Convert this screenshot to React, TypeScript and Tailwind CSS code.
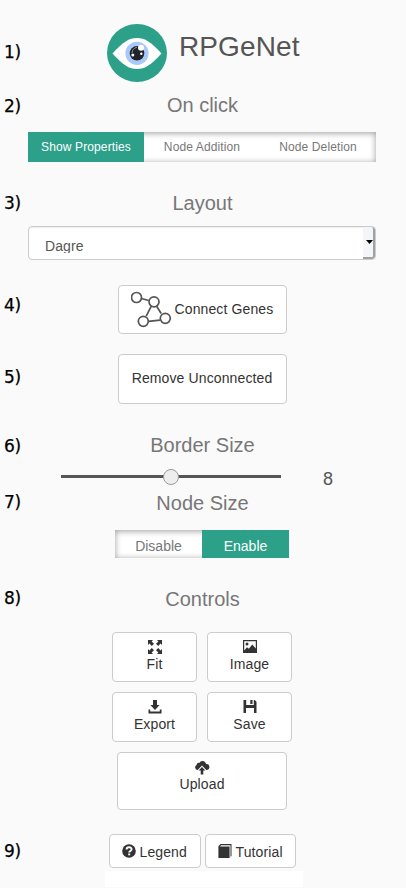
import React from "react";

type IconProps = { className?: string };

function EyeLogo() {
  return (
    <svg width="60" height="58" viewBox="0 0 60 58" className="block">
      <ellipse cx="30" cy="29" rx="30" ry="29" fill="#2ca089" />
      <path d="M5.500 29.500C16 18 22 14 30 14S44 18 54.500 29.500C44 41 38 45 30 45S16 41 5.500 29.500Z" fill="#fff" />
      <circle cx="30" cy="29.300" r="11.600" fill="#a9c8fb" />
      <circle cx="30" cy="29.300" r="7.300" fill="#202428" />
      <path d="M25 29c.2-3 2-5 5-5.800" stroke="#8a8f94" strokeWidth="1" fill="none" />
      <circle cx="34" cy="23.800" r="3" fill="#fff" />
      <circle cx="25.800" cy="31" r="1.500" fill="#fff" />
      <circle cx="34.300" cy="29.800" r="1.200" fill="#fff" />
    </svg>
  );
}

function GraphIcon() {
  return (
    <svg width="42" height="37" viewBox="0 0 42 37" fill="none" stroke="#555" strokeWidth="1.700" className="block">
      <path d="M10.500 7.500l7.200 2M20.300 15.200l-5.100 10M25.500 15l4.700 7.500M17.500 30.400l11.500-1.300" />
      <circle cx="5.500" cy="6.500" r="5" />
      <circle cx="23" cy="10.800" r="5" />
      <circle cx="12.300" cy="30.300" r="5" />
      <circle cx="34.300" cy="27.300" r="5" />
    </svg>
  );
}

function FitIcon() {
  return (
    <svg width="14" height="14" viewBox="0 0 14 14" fill="#333" className="block">
      <path d="M0 0h5L3.600 1.400 6 3.800 3.800 6 1.400 3.600 0 5zM14 0v5l-1.400-1.400L10.200 6 8 3.800l2.400-2.400L9 0zM0 14V9l1.400 1.400L3.800 8 6 10.200l-2.400 2.400L5 14zM14 14H9l1.400-1.400L8 10.200 10.200 8l2.400 2.400L14 9z" />
    </svg>
  );
}

function ImageIcon() {
  return (
    <svg width="14" height="13" viewBox="0 0 14 13" fill="#333" className="block">
      <path fillRule="evenodd" d="M0 0h14v13H0zM1.200 1.200v9.200L4 7.300l1.800 1.500L9.300 4.600l3.500 4V1.200z" />
      <circle cx="4" cy="4" r="1.500" />
    </svg>
  );
}

function ExportIcon() {
  return (
    <svg width="14" height="14" viewBox="0 0 14 14" fill="#333" className="block">
      <path d="M5 0h4v5h2.600L7 10 2.400 5H5zM.5 9.500h1.700v2h9.600v-2h1.700V13.500H.5z" />
    </svg>
  );
}

function SaveIcon() {
  return (
    <svg width="14" height="14" viewBox="0 0 14 14" fill="#333" className="block">
      <path fillRule="evenodd" d="M.5 0h2.700v5h7.600V0h.9l1.800 1.800V13H11V8H3v5H.5z" />
      <path d="M7.300 0h2.200v4H7.300z" />
    </svg>
  );
}

function UploadIcon() {
  return (
    <svg width="16" height="14" viewBox="0 0 16 14" fill="#333" className="block">
      <path d="M3.300 9A2.700 2.700 0 0 1 2.500 4 2.500 2.500 0 0 1 5.300 1.900 3.600 3.600 0 0 1 12 3.100 2.900 2.900 0 0 1 13 8.900H12.300L8 4.600 3.700 9z" />
      <path d="M8 6.100l3.400 3.500H9.300V13.500H6.700V9.600H4.600z" />
    </svg>
  );
}

function QuestionIcon({ className }: IconProps) {
  return (
    <svg width="14" height="14" viewBox="0 0 14 14" className={className}>
      <circle cx="7" cy="7" r="6.800" fill="#333" />
      <path d="M4.600 5.500C4.600 2.500 9.600 2.500 9.600 5.300 9.600 7 7.200 6.900 7.200 8.500" fill="none" stroke="#fff" strokeWidth="1.900" />
      <path d="M6.200 9.500h2v1.800h-2z" fill="#fff" />
    </svg>
  );
}

function BookIcon({ className }: IconProps) {
  return (
    <svg width="14" height="14" viewBox="0 0 14 14" className={className}>
      <path d="M.4 2.200L2.500 0h11v12l-1 .8V1.200H3L2 2.400h9.600V14H.4z" fill="#333" />
    </svg>
  );
}

function Section({ className, label, labelClass, children }: { className: string; label: string; labelClass: string; children: React.ReactNode }) {
  return (
    <section className={`flex shrink-0 ${className}`}>
      <div className="w-7 shrink-0 pl-1">
        <div className={`h-5 font-['DejaVu_Sans',sans-serif] text-[17px] leading-5 tracking-[-0.3px] text-black [-webkit-text-stroke:0.25px_black] ${labelClass}`}>{label}</div>
      </div>
      <div className="flex w-[348px] shrink-0 flex-col items-center">{children}</div>
    </section>
  );
}

function Heading({ children }: { children: React.ReactNode }) {
  return <h2 className="h-6 shrink-0 pl-px text-xl leading-6 whitespace-nowrap text-[#777]">{children}</h2>;
}

const button = "shrink-0 rounded border border-[#ccc] bg-white text-sm leading-5 tracking-[0.12px] whitespace-nowrap text-[#333]";

function Tile({ icon, text }: { icon: React.ReactNode; text: string }) {
  return (
    <button className={`${button} flex h-[50px] w-[85px] flex-col items-center pt-[7px]`}>
      <span className="flex h-[14px] items-start">{icon}</span>
      <span>{text}</span>
    </button>
  );
}

export default function App() {
  return (
    <main className="flex h-[888px] w-[406px] flex-col overflow-hidden bg-[#fafafa] font-['Liberation_Sans',Arial,sans-serif]">
      <Section className="h-[93px]" label="1)" labelClass="mt-[42px]">
        <div className="mt-6 flex w-full pl-[79px]">
          <EyeLogo />
          <h1 className="ml-3 h-10 pt-[7px] text-[28px] leading-8 tracking-[0.1px] text-[#555]">RPGeNet</h1>
        </div>
      </Section>

      <Section className="h-[98px]" label="2)" labelClass="mt-[3px]">
        <Heading>On click</Heading>
        <div className="mt-[15px] grid h-[30px] w-full grid-cols-3 bg-white text-center text-xs leading-[31px] tracking-[0.12px] text-[#777] shadow-[inset_0_1px_6px_rgba(0,0,0,0.4)]">
          <div className="h-[30px] bg-[#2ca089] text-white">Show Properties</div>
          <div className="h-[30px]">Node Addition</div>
          <div className="h-[30px]">Node Deletion</div>
        </div>
      </Section>

      <Section className="h-[94px]" label="3)" labelClass="mt-0.5">
        <Heading>Layout</Heading>
        <div className="mt-[11px] flex h-[34px] w-full justify-between overflow-hidden rounded border border-[#ccc] bg-white shadow-[inset_0_1px_1px_rgba(0,0,0,0.075)]">
          <div className="mt-[9px] h-[17px] overflow-hidden pl-4 text-sm leading-5 tracking-[0.1px] text-[#555]">Dagre</div>
          <div className="flex w-3 items-center justify-end rounded-r-[3px] border-r-2 border-b-2 border-[#9da3a4] bg-[#f3f5f7]">
            <svg width="7" height="4" viewBox="0 0 7 4" className="block">
              <path d="M0 0h7L3.500 4z" fill="#000" />
            </svg>
          </div>
        </div>
      </Section>

      <Section className="h-[69px]" label="4)" labelClass="mt-[10px]">
        <button className={`${button} flex h-[49px] w-[169px] pl-3`}>
          <span className="mt-[5px]"><GraphIcon /></span>
          <span className="mt-[13px] ml-0.5">Connect Genes</span>
        </button>
      </Section>

      <Section className="h-[79px]" label="5)" labelClass="mt-[13px]">
        <button className={`${button} h-[50px] w-[169px] pb-[2px]`}>Remove Unconnected</button>
      </Section>

      <Section className="h-[58px]" label="6)" labelClass="mt-[3px]">
        <Heading>Border Size</Heading>
        <div className="flex h-8 w-full pt-3 pl-[33px]">
          <div className="mt-[6px] flex h-[3px] w-[220px] items-center justify-center bg-[#555]">
            <div className="mt-px h-4 w-4 shrink-0 rounded-full border border-[#999] bg-[#eee]" />
          </div>
          <span className="ml-[42px] text-lg leading-5 text-[#555]">8</span>
        </div>
      </Section>

      <Section className="h-24" label="7)" labelClass="mt-px">
        <Heading>Node Size</Heading>
        <div className="mt-[15px] grid h-7 w-[174px] grid-cols-2 bg-white text-center text-sm leading-8 text-[#777] shadow-[inset_0_1px_6px_rgba(0,0,0,0.4)]">
          <div className="h-7">Disable</div>
          <div className="h-7 bg-[#2ca089] text-white">Enable</div>
        </div>
      </Section>

      <Section className="h-[247px]" label="8)" labelClass="mt-px">
        <Heading>Controls</Heading>
        <div className="mt-[21px] grid grid-cols-2 gap-[10px]">
          <Tile icon={<FitIcon />} text="Fit" />
          <Tile icon={<ImageIcon />} text="Image" />
          <Tile icon={<ExportIcon />} text="Export" />
          <Tile icon={<SaveIcon />} text="Save" />
        </div>
        <button className={`${button} mt-[10px] flex h-[58px] w-[170px] flex-col items-center pt-2`}>
          <UploadIcon />
          <span className="-mt-px">Upload</span>
        </button>
      </Section>

      <Section className="h-[54px]" label="9)" labelClass="mt-[7px]">
        <div className="flex gap-1">
          <button className={`${button} flex h-[34px] w-[92px] items-center pl-3`}>
            <QuestionIcon className="mr-1" />
            <span className="pt-0.5">Legend</span>
          </button>
          <button className={`${button} flex h-[34px] w-[91px] items-center pl-3`}>
            <BookIcon className="mr-1" />
            <span className="pt-0.5">Tutorial</span>
          </button>
        </div>
        <div className="mt-[3px] ml-1 h-4 w-[198px] bg-white" />
      </Section>
    </main>
  );
}
